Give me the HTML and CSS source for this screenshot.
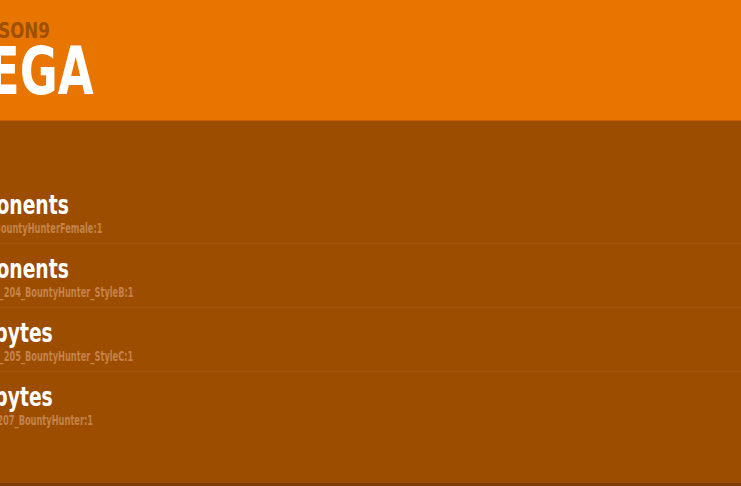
FILE: index.html
```html
<!DOCTYPE html>
<html lang="en">
<head>
    <meta charset="UTF-8">
    <meta name="viewport" content="width=device-width, initial-scale=1.0">
    <title>MEGA</title>
    <link rel="stylesheet" href="styles.css">
</head>
<body>
    <!-- Season header -->
    <header class="hero">
        <p class="season">SEASON9</p>
        <h1 class="season-title">MEGA</h1>
    </header>

    <!-- Item list -->
    <main class="list">
        <div class="row">
            <div class="row-name">Components</div>
            <div class="row-id">CharBountyHunterFemale:1</div>
        </div>
        <div class="row">
            <div class="row-name">Components</div>
            <div class="row-id">CID_A_204_BountyHunter_StyleB:1</div>
        </div>
        <div class="row">
            <div class="row-name">Megabytes</div>
            <div class="row-id">CID_A_205_BountyHunter_StyleC:1</div>
        </div>
        <div class="row">
            <div class="row-name">Megabytes</div>
            <div class="row-id">Skin_207_BountyHunter:1</div>
        </div>
    </main>
</body>
</html>
```

FILE: styles.css
```css
html, body {
    height: 100%;
}
body {
    margin: 0;
    font-family: "DejaVu Sans Condensed", "DejaVu Sans", sans-serif;
    background-color: #9c4d00;
    color: #fff;
    overflow: hidden;
    display: flex;
    flex-direction: column;
}
.hero {
    background-color: #e87500;
    height: 121px;
    padding-top: 19px;
    box-sizing: border-box;
    border-bottom: 1px solid #c46200;
    flex: none;
}
.season {
    margin: 0 0 0 -38px;
    font-size: 21px;
    font-weight: bold;
    color: #9e4f00;
    line-height: 24px;
    white-space: nowrap;
    transform: scaleX(0.88);
    transform-origin: left;
}
.season-title {
    margin: 0 0 0 -58px;
    font-size: 66px;
    font-weight: bold;
    line-height: 58px;
    white-space: nowrap;
    transform: scaleX(0.78);
    transform-origin: left;
}
.list {
    flex: 1;
    padding-top: 59px;
    border-bottom: 3px solid #7a3a00;
}
.row {
    height: 64px;
    padding-top: 10px;
    box-sizing: border-box;
    border-bottom: 1px solid rgba(255, 255, 255, 0.06);
}
.row:last-child {
    border-bottom: none;
}
.row-name {
    margin-left: -63px;
    font-size: 26px;
    font-weight: bold;
    line-height: 30px;
    white-space: nowrap;
    transform: scaleX(0.8);
    transform-origin: left;
}
.row-id {
    margin-left: -27px;
    font-size: 13.5px;
    font-weight: bold;
    color: #c4834a;
    line-height: 16px;
    white-space: nowrap;
    transform: scaleX(0.68);
    transform-origin: left;
}
```
